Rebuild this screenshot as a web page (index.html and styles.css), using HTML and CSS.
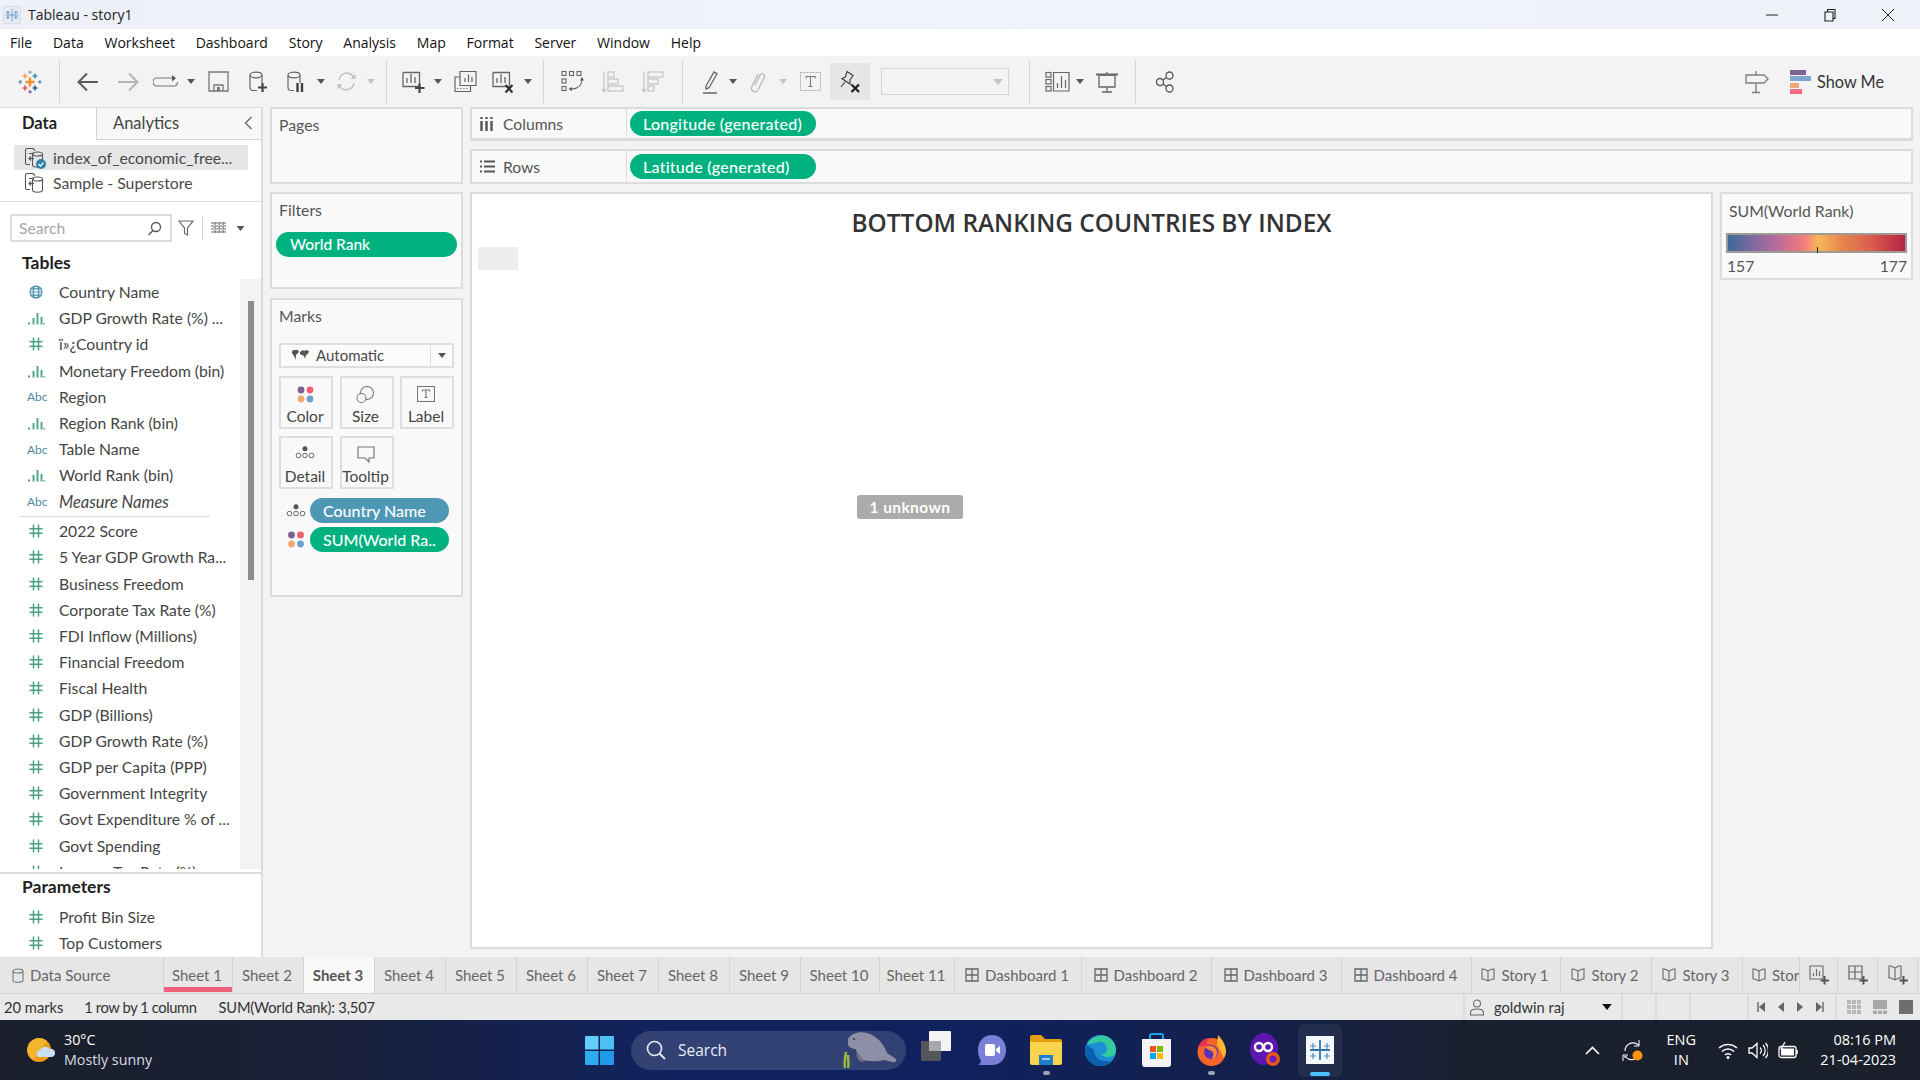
FILE: index.html
```html
<!DOCTYPE html>
<html lang="en">
<head>
<meta charset="UTF-8" />
<title>Tableau - story1</title>
<link rel="stylesheet" href="styles.css">
</head>
<body>

<!-- shared icons -->
<svg class="sprite" aria-hidden="true">
  <symbol id="hash" viewBox="0 0 14 14"><path d="M4.500 .5v13M9.500 .5v13M.5 4.800h13M.5 9.200h13" fill="none" stroke="#4a9f84" stroke-width="1.500"/></symbol>
  <symbol id="bars" viewBox="0 0 18 14"><path d="M2 11.500v2M6.500 7v6.500M10.500 2v11.500M14.500 6v7.500" fill="none" stroke="#4fa58a" stroke-width="1.900"/><path d="M17 12v1.500" stroke="#4fa58a" stroke-width="1.500"/></symbol>
  <symbol id="globe" viewBox="0 0 14 14"><g fill="none" stroke="#4a90ae" stroke-width="1.200"><circle cx="7" cy="7" r="6"/><ellipse cx="7" cy="7" rx="2.800" ry="6"/><path d="M1 7h12M2 3.800h10M2 10.200h10"/></g></symbol>
  <symbol id="caret" viewBox="0 0 8 5"><path d="M0 0h8L4 5z"/></symbol>
  <symbol id="dots" viewBox="0 0 20 13"><g fill="none" stroke="#666" stroke-width="1"><circle cx="3.500" cy="9.500" r="2.300"/><circle cx="10" cy="9.500" r="2.300"/><circle cx="16.500" cy="9.500" r="2.300"/></g><circle cx="10" cy="2.700" r="2.500" fill="#555"/></symbol>
  <symbol id="colors" viewBox="0 0 17 17"><circle cx="4" cy="4" r="3.400" fill="#7b5f93"/><circle cx="13" cy="4" r="3.400" fill="#f1606f"/><circle cx="4" cy="13" r="3.400" fill="#f2a873"/><circle cx="13" cy="13" r="3.400" fill="#6f9fcf"/></symbol>
  <symbol id="board" viewBox="0 0 14 14"><path d="M1 1h12v12H1zM1 7h12M7 1v12" fill="none" stroke="#666" stroke-width="1.300"/></symbol>
  <symbol id="book" viewBox="0 0 14 14"><path d="M7 3L2.500 1H1v10l1.500 0L7 13l4.500-2H13V1h-1.500zM7 3v10" fill="none" stroke="#666" stroke-width="1.100"/></symbol>
  <symbol id="datasrc" viewBox="0 0 22 22"><g fill="none" stroke="#555" stroke-width="1.100"><path d="M6 1.500h-3a1.500 1.500 0 0 0-1.500 1.500v13a1.500 1.500 0 0 0 1.500 1.500h3"/><path d="M6 1.500h3l2 2M5 6.500h5M5 11.500h5M7 9.500l-2 2 2 2"/><ellipse cx="13.500" cy="7" rx="5" ry="2"/><path d="M8.500 7v11c0 1.100 2.200 2.200 5 2.200s5-1.100 5-2.200V7"/></g></symbol>
</svg>

<header class="title-bar">
  <svg class="app-icon" width="18" height="18" viewBox="0 0 18 18"><rect x=".5" y=".5" width="17" height="17" fill="#e6ebf3" stroke="#d8dee8"/><path d="M9 3v12M3 9h12M5 5v3M3.500 6.500h3M13 5v3M11.500 6.500h3M5 10v3M3.500 11.500h3M13 10v3M11.500 11.500h3" stroke="#6f9cc7" stroke-width="1.300" stroke-dasharray="1.500 .7"/></svg>
  <span class="app-title">Tableau - story1</span>
  <div class="win-buttons">
    <svg width="14" height="14" viewBox="0 0 14 14"><path d="M1 7h12" stroke="#222" stroke-width="1"/></svg>
    <svg width="14" height="14" viewBox="0 0 14 14"><path d="M2 4h8v9H2zM4.500 4V1.500h7.500V10.500H10" fill="none" stroke="#222" stroke-width="1.100"/></svg>
    <svg width="14" height="14" viewBox="0 0 14 14"><path d="M1 1l12 12M13 1L1 13" stroke="#222" stroke-width="1"/></svg>
  </div>
</header>

<nav class="menu-bar">
  <a>File</a><a>Data</a><a>Worksheet</a><a>Dashboard</a><a>Story</a><a>Analysis</a><a>Map</a><a>Format</a><a>Server</a><a>Window</a><a>Help</a>
</nav>

<div class="toolbar">
  <span class="tool t-logo">
    <svg width="24" height="24" viewBox="0 0 24 24" fill="none" stroke-width="1.700">
      <path d="M12 7.500v9M7.500 12h9" stroke="#f28e2b" stroke-width="2.300"/>
      <path d="M7 3.500v5M4.500 6h5" stroke="#f2a65a"/><path d="M17 3.500v5M14.500 6h5" stroke="#4e93b5"/>
      <path d="M7 15.500v5M4.500 18h5" stroke="#e15759"/><path d="M17 15.500v5M14.500 18h5" stroke="#2f5f92"/>
      <path d="M12 .5v3.500M10.200 2.200h3.600" stroke="#9fb4cc"/><path d="M12 20v3.500M10.200 21.800h3.600" stroke="#9c7ca8"/>
      <path d="M2.200 10.200v3.600M.5 12H4" stroke="#6b94b8"/><path d="M21.800 10.200v3.600M20 12h3.500" stroke="#6fa0bb"/>
    </svg>
  </span>
  <i class="sep flush"></i>
  <span class="tool t40"><svg width="22" height="20" viewBox="0 0 22 20"><path d="M21 10H2M10 1.500L1.500 10l8.500 8.500" fill="none" stroke="#5c5c5c" stroke-width="2.100"/></svg></span>
  <span class="tool t40"><svg width="22" height="20" viewBox="0 0 22 20"><path d="M1 10h19M12 1.500l8.500 8.500-8.500 8.500" fill="none" stroke="#b5b5b5" stroke-width="2.100"/></svg></span>
  <span class="tool t36"><svg width="26" height="14" viewBox="0 0 26 14"><path d="M20 3H4a3.500 3.500 0 0 0 0 8h17a3.500 3.500 0 0 0 3.500-4" fill="none" stroke="#777" stroke-width="1.200"/><path d="M19 0v6.500l4-3.200z" fill="#555"/></svg></span>
  <span class="tool t14"><svg class="cr" width="8" height="5"><use href="#caret"/></svg></span>
  <span class="tool t40"><svg width="21" height="21" viewBox="0 0 21 21"><path d="M1 1h19v19H1zM6 20v-6h9v6" fill="none" stroke="#777" stroke-width="1.300"/><path d="M9 16h3v4H9z" fill="#777"/></svg></span>
  <span class="tool t40"><svg width="20" height="22" viewBox="0 0 20 22"><g fill="none" stroke="#666" stroke-width="1.200"><ellipse cx="8" cy="4" rx="6" ry="2.800"/><path d="M2 4v13a3 3 0 0 0 3 2.500h4M14 4v8"/></g><path d="M14.500 12v9M10 16.500h9" stroke="#444" stroke-width="2.200"/></svg></span>
  <span class="tool t36"><svg width="18" height="22" viewBox="0 0 18 22"><g fill="none" stroke="#666" stroke-width="1.200"><ellipse cx="7" cy="4" rx="6" ry="2.800"/><path d="M1 4v13a3 3 0 0 0 3 2.500h3M13 4v8"/></g><path d="M10.500 12v9M15 12v9" stroke="#444" stroke-width="2.400"/></svg></span>
  <span class="tool t14"><svg class="cr" width="8" height="5"><use href="#caret"/></svg></span>
  <span class="tool t36"><svg width="21" height="21" viewBox="0 0 21 21"><path d="M3 9a8 8 0 0 1 14-4l1.500 2M18 12a8 8 0 0 1-14 4l-1.500-2" fill="none" stroke="#c2c2c2" stroke-width="1.500"/><path d="M19.500 3v5h-5zM1.500 18v-5h5z" fill="#c2c2c2"/></svg></span>
  <span class="tool t14"><svg class="cr off" width="8" height="5"><use href="#caret"/></svg></span>
  <i class="sep"></i>
  <span class="tool t36"><svg width="23" height="24" viewBox="0 0 23 24"><path d="M1 2.500v14h16.500V2.500H1M5 13v-5M9 13V4M13 13V7" fill="none" stroke="#666" stroke-width="1.300"/><path d="M17.500 13.500v9.500M13 18h9.500" stroke="#444" stroke-width="2.200"/></svg></span>
  <span class="tool t14"><svg class="cr" width="8" height="5"><use href="#caret"/></svg></span>
  <span class="tool t40"><svg width="23" height="24" viewBox="0 0 23 24"><path d="M6 1.500h16v14H6zM11 12V8M14.500 12V4.500M18 12V7M6 7H1v14.500h15.500V15.500M4 19v-1M7 19v-1M10 19v-1M13 19v-1" fill="none" stroke="#666" stroke-width="1.200"/></svg></span>
  <span class="tool t36"><svg width="22" height="24" viewBox="0 0 22 24"><path d="M1 2.500v14h16.500V2.500H1M5 13V8M9 13V4M13 13V7" fill="none" stroke="#666" stroke-width="1.300"/><path d="M13.500 15l7 7.500M20.500 15l-7 7.500" stroke="#333" stroke-width="2.200"/></svg></span>
  <span class="tool t14"><svg class="cr" width="8" height="5"><use href="#caret"/></svg></span>
  <i class="sep"></i>
  <span class="tool t40"><svg width="23" height="24" viewBox="0 0 23 24"><g fill="none" stroke="#666" stroke-width="1.100"><rect x="1" y="1.500" width="4" height="4"/><rect x="8.500" y="1.500" width="4" height="4"/><rect x="16" y="1.500" width="4" height="4"/><rect x="1" y="9" width="4" height="4"/><rect x="1" y="16.500" width="4" height="4"/><path d="M21 9c0 6-4 9.500-10 10"/></g><path d="M19 10.500L21 7l2 3.500zM11 17l-3.500 2 3.500 2z" fill="#555"/></svg></span>
  <span class="tool t40"><svg width="23" height="24" viewBox="0 0 23 24"><g fill="none" stroke="#c4c4c4" stroke-width="1.200"><path d="M3 2v18"/><rect x="7" y="2" width="6" height="5"/><rect x="7" y="9" width="10" height="5"/><rect x="7" y="16" width="15" height="5"/></g><path d="M0.500 19L3 23l2.500-4z" fill="#c4c4c4"/></svg></span>
  <span class="tool t40"><svg width="23" height="24" viewBox="0 0 23 24"><g fill="none" stroke="#c4c4c4" stroke-width="1.200"><path d="M3 2v18"/><rect x="7" y="2" width="15" height="5"/><rect x="7" y="9" width="10" height="5"/><rect x="7" y="16" width="6" height="5"/></g><path d="M0.500 19L3 23l2.500-4z" fill="#c4c4c4"/></svg></span>
  <i class="sep far"></i>
  <span class="tool t32"><svg width="16" height="24" viewBox="0 0 16 24"><path d="M4 16L12 2l3 1.700-8 14-3 1.300zM1 23h14" fill="none" stroke="#666" stroke-width="1.300"/></svg></span>
  <span class="tool t14"><svg class="cr" width="8" height="5"><use href="#caret"/></svg></span>
  <span class="tool t36"><svg width="16" height="24" viewBox="0 0 16 24"><path d="M5 15l5-10a2.500 2.500 0 0 1 4.500 2L8 20a3.500 3.500 0 0 1-6.300-3L8 4" fill="none" stroke="#b8b8b8" stroke-width="1.300"/></svg></span>
  <span class="tool t14"><svg class="cr off" width="8" height="5"><use href="#caret"/></svg></span>
  <span class="tool t40"><svg width="21" height="19" viewBox="0 0 21 19"><rect x=".5" y=".5" width="20" height="18" fill="none" stroke="#aaa" stroke-dasharray="2 1"/><path d="M6 4.500h9v2M10.500 4.500v10M8.500 14.500h4M6 4.500v2" fill="none" stroke="#777" stroke-width="1.100"/></svg></span>
  <span class="tool t40 pressed"><svg width="22" height="24" viewBox="0 0 22 24"><path d="M8 1.500l6 4-3 4.500 0 4-8-5.500 3.500-1.500zM6 12l-4 5" fill="none" stroke="#444" stroke-width="1.200"/><path d="M12.500 14.500l7.500 7.500M20 14.500L12.500 22" stroke="#222" stroke-width="2.300"/></svg></span>
  <span class="combo"><svg class="cr off" width="10" height="6"><use href="#caret"/></svg></span>
  <i class="sep flush"></i>
  <span class="tool t32 after-sep"><svg width="25" height="22" viewBox="0 0 25 22"><g fill="none" stroke="#666" stroke-width="1.200"><rect x="1" y="1.500" width="5" height="4.500"/><rect x="1" y="8.500" width="5" height="4.500"/><rect x="1" y="15.500" width="5" height="4.500"/><path d="M8.500 1.500h15.500v18.500H8.500zM12.500 17v-5M16.500 17V5M20.500 17V9"/></g></svg></span>
  <span class="tool t14"><svg class="cr" width="8" height="5"><use href="#caret"/></svg></span>
  <span class="tool t40"><svg width="22" height="22" viewBox="0 0 22 22"><path d="M3 4h16v12H3zM11 16v5M6 21h10M11 1v3" fill="none" stroke="#666" stroke-width="1.300"/><path d="M0 2.500h22v2H0z" fill="#666"/></svg></span>
  <i class="sep"></i>
  <span class="tool t36 after-sep"><svg width="19" height="22" viewBox="0 0 19 22"><g fill="none" stroke="#555" stroke-width="1.300"><circle cx="13.500" cy="4.500" r="3.500"/><circle cx="4" cy="11" r="3.500"/><circle cx="13.500" cy="17.500" r="3.500"/><path d="M7 9l3.500-2.500M7 13l3.500 2.500"/></g></svg></span>

  <div class="toolbar-right">
    <svg width="24" height="24" viewBox="0 0 24 24"><path d="M1 5h18l4 4-4 4H1zM11 1v4M11 13v9M7 22.500h8" fill="none" stroke="#808080" stroke-width="1.400"/></svg>
    <span class="show-me">
      <svg width="21" height="24" viewBox="0 0 21 24"><rect width="16" height="5" fill="#7b6394"/><rect y="6" width="21" height="5" fill="#7ea5cf"/><rect y="13" width="9" height="5" fill="#f2a878"/><rect y="19" width="12" height="5" fill="#f26b80"/></svg>
      Show Me
    </span>
  </div>
</div>

<div class="workspace">

  <aside class="data-pane">
    <div class="pane-tabs">
      <span class="pane-tab active">Data</span>
      <span class="pane-tab">Analytics</span>
      <svg class="collapse" width="9" height="14" viewBox="0 0 9 14"><path d="M7.500 1L1.500 7l6 6" fill="none" stroke="#666" stroke-width="1.300"/></svg>
    </div>
    <div class="sources">
      <div class="source selected">
        <svg width="22" height="22"><use href="#datasrc"/><circle cx="17" cy="17" r="5" fill="#2f80a8"/><path d="M14.500 17l2 2 3-3.500" fill="none" stroke="#fff" stroke-width="1.200"/></svg>
        index_of_economic_free...
      </div>
      <div class="source">
        <svg width="22" height="22"><use href="#datasrc"/></svg>
        Sample - Superstore
      </div>
    </div>
    <div class="search-row">
      <div class="search-box">
        <span>Search</span>
        <svg width="15" height="15" viewBox="0 0 15 15"><circle cx="9" cy="6" r="4.500" fill="none" stroke="#555" stroke-width="1.300"/><path d="M6 9.500L1.500 14" stroke="#555" stroke-width="1.400"/></svg>
      </div>
      <svg class="funnel" width="16" height="16" viewBox="0 0 16 16"><path d="M1 1h14L9.500 8v7l-3-1.500V8z" fill="none" stroke="#666" stroke-width="1.200"/></svg>
      <i class="search-sep"></i>
      <svg class="list-icon" width="16" height="12" viewBox="0 0 16 12"><path d="M0 1h16M0 4h16M0 7h16M0 10h16M4 0v12M8 0v12M12 0v12" stroke="#666" stroke-width="1.100" stroke-dasharray="3 1"/></svg>
      <svg class="cr list-caret" width="9" height="5"><use href="#caret"/></svg>
    </div>
    <h3 class="group-title">Tables</h3>
    <div class="field-area">
      <ul class="fields">
        <li><svg class="fi" width="14" height="14"><use href="#globe"/></svg>Country Name</li>
        <li><svg class="fi" width="18" height="14"><use href="#bars"/></svg>GDP Growth Rate (%) ...</li>
        <li><svg class="fi" width="14" height="14"><use href="#hash"/></svg>ï»¿Country id</li>
        <li><svg class="fi" width="18" height="14"><use href="#bars"/></svg>Monetary Freedom (bin)</li>
        <li><span class="abc">Abc</span>Region</li>
        <li><svg class="fi" width="18" height="14"><use href="#bars"/></svg>Region Rank (bin)</li>
        <li><span class="abc">Abc</span>Table Name</li>
        <li><svg class="fi" width="18" height="14"><use href="#bars"/></svg>World Rank (bin)</li>
        <li><span class="abc">Abc</span><em>Measure Names</em></li>
        <li class="divider"></li>
        <li><svg class="fi" width="14" height="14"><use href="#hash"/></svg>2022 Score</li>
        <li><svg class="fi" width="14" height="14"><use href="#hash"/></svg>5 Year GDP Growth Ra...</li>
        <li><svg class="fi" width="14" height="14"><use href="#hash"/></svg>Business Freedom</li>
        <li><svg class="fi" width="14" height="14"><use href="#hash"/></svg>Corporate Tax Rate (%)</li>
        <li><svg class="fi" width="14" height="14"><use href="#hash"/></svg>FDI Inflow (Millions)</li>
        <li><svg class="fi" width="14" height="14"><use href="#hash"/></svg>Financial Freedom</li>
        <li><svg class="fi" width="14" height="14"><use href="#hash"/></svg>Fiscal Health</li>
        <li><svg class="fi" width="14" height="14"><use href="#hash"/></svg>GDP (Billions)</li>
        <li><svg class="fi" width="14" height="14"><use href="#hash"/></svg>GDP Growth Rate (%)</li>
        <li><svg class="fi" width="14" height="14"><use href="#hash"/></svg>GDP per Capita (PPP)</li>
        <li><svg class="fi" width="14" height="14"><use href="#hash"/></svg>Government Integrity</li>
        <li><svg class="fi" width="14" height="14"><use href="#hash"/></svg>Govt Expenditure % of ...</li>
        <li><svg class="fi" width="14" height="14"><use href="#hash"/></svg>Govt Spending</li>
        <li><svg class="fi" width="14" height="14"><use href="#hash"/></svg>Income Tax Rate (%)</li>
      </ul>
      <div class="scroll-track"><div class="scroll-thumb"></div></div>
    </div>
    <div class="params">
      <h3 class="group-title">Parameters</h3>
      <ul class="fields">
        <li><svg class="fi" width="14" height="14"><use href="#hash"/></svg>Profit Bin Size</li>
        <li><svg class="fi" width="14" height="14"><use href="#hash"/></svg>Top Customers</li>
      </ul>
    </div>
  </aside>

  <section class="cards">
    <div class="card pages"><h4>Pages</h4></div>
    <div class="card filters">
      <h4>Filters</h4>
      <div class="pill green wide">World Rank</div>
    </div>
    <div class="card marks">
      <h4>Marks</h4>
      <div class="mark-select">
        <svg width="17" height="11" viewBox="0 0 17 11"><path d="M0 1l2-1h4l1 2-2 2-1 1-.5 5L2 6 0 3zM8 2l3-2 1 1 2-1 3 1-1 3-2 1-1 4-1-3-2-1-2-1z" fill="#555"/></svg>
        <span>Automatic</span>
        <b><svg class="cr" width="8" height="5"><use href="#caret"/></svg></b>
      </div>
      <div class="mark-grid">
        <div class="mark-btn"><svg width="17" height="17"><use href="#colors"/></svg>Color</div>
        <div class="mark-btn"><svg width="19" height="18" viewBox="0 0 19 18"><circle cx="11" cy="7" r="6.500" fill="none" stroke="#777" stroke-width="1.100"/><circle cx="5.500" cy="12" r="4.500" fill="#f9f9f9" stroke="#777" stroke-width="1.100"/></svg>Size</div>
        <div class="mark-btn"><svg width="18" height="16" viewBox="0 0 18 16"><rect x=".5" y=".5" width="17" height="15" fill="none" stroke="#777" stroke-width="1.100"/><path d="M5.500 4h7v1.500M9 4v7.500M7.500 11.500h3M5.500 4v1.500" fill="none" stroke="#777" stroke-width="1.100"/></svg>Label</div>
        <div class="mark-btn"><svg width="20" height="13"><use href="#dots"/></svg>Detail</div>
        <div class="mark-btn"><svg width="18" height="17" viewBox="0 0 18 17"><path d="M1 1h16v11h-5v4l-4-4H1z" fill="none" stroke="#777" stroke-width="1.200"/></svg>Tooltip</div>
      </div>
      <div class="mark-fields">
        <div class="mark-field"><svg width="20" height="13"><use href="#dots"/></svg><div class="pill blue">Country Name</div></div>
        <div class="mark-field"><svg width="17" height="17"><use href="#colors"/></svg><div class="pill green">SUM(World Ra..</div></div>
      </div>
    </div>
  </section>

  <section class="view-area">
    <div class="shelf columns">
      <div class="shelf-label">
        <svg width="13" height="14" viewBox="0 0 13 14"><path d="M1.500 0v2M6.500 0v2M11.500 0v2M1.500 4v10M6.500 4v10M11.500 4v10" stroke="#555" stroke-width="2.400"/></svg>
        Columns
      </div>
      <div class="pill green shelf-pill">Longitude (generated)</div>
    </div>
    <div class="shelf">
      <div class="shelf-label rows-label">
        <svg width="15" height="13" viewBox="0 0 15 13"><path d="M0 1.500h2M4 1.500h11M0 6.500h2M4 6.500h11M0 11.500h2M4 11.500h11" stroke="#555" stroke-width="2"/></svg>
        Rows
      </div>
      <div class="pill green shelf-pill">Latitude (generated)</div>
    </div>
    <div class="view-row">
      <div class="canvas">
        <h2 class="viz-title">BOTTOM RANKING COUNTRIES BY INDEX</h2>
        <div class="axis-stub"></div>
        <div class="unknown-badge">1 unknown</div>
      </div>
      <div class="card legend">
        <h4>SUM(World Rank)</h4>
        <div class="ramp"><i></i></div>
        <div class="ramp-labels"><span>157</span><span>177</span></div>
      </div>
    </div>
  </section>
</div>

<div class="tab-bar">
  <span class="tab ds"><svg width="12" height="15" viewBox="0 0 12 15"><path d="M1 3v9.500c0 1 2.200 1.800 5 1.800s5-.8 5-1.800V3" fill="none" stroke="#777" stroke-width="1.100"/><ellipse cx="6" cy="3" rx="5" ry="2" fill="none" stroke="#777" stroke-width="1.100"/></svg>Data Source</span>
  <span class="tab s1">Sheet 1</span>
  <span class="tab">Sheet 2</span>
  <span class="tab current">Sheet 3</span>
  <span class="tab">Sheet 4</span>
  <span class="tab">Sheet 5</span>
  <span class="tab">Sheet 6</span>
  <span class="tab">Sheet 7</span>
  <span class="tab">Sheet 8</span>
  <span class="tab">Sheet 9</span>
  <span class="tab w79">Sheet 10</span>
  <span class="tab w75">Sheet 11</span>
  <span class="tab board first"><svg width="14" height="14"><use href="#board"/></svg>Dashboard 1</span>
  <span class="tab board"><svg width="14" height="14"><use href="#board"/></svg>Dashboard 2</span>
  <span class="tab board"><svg width="14" height="14"><use href="#board"/></svg>Dashboard 3</span>
  <span class="tab board"><svg width="14" height="14"><use href="#board"/></svg>Dashboard 4</span>
  <span class="tab story first"><svg width="14" height="14"><use href="#book"/></svg>Story 1</span>
  <span class="tab story"><svg width="14" height="14"><use href="#book"/></svg>Story 2</span>
  <span class="tab story"><svg width="14" height="14"><use href="#book"/></svg>Story 3</span>
  <span class="tab clipped"><svg width="14" height="14"><use href="#book"/></svg>Story 4</span>
  <span class="tab add first"><svg width="22" height="20" viewBox="0 0 22 20"><path d="M1 1h13v13H1zM4.500 11V8M7.500 11V4M10.500 11V6" fill="none" stroke="#666" stroke-width="1.100"/><path d="M15.500 11v8.500M11.500 15.500H20" stroke="#555" stroke-width="2"/></svg></span>
  <span class="tab add"><svg width="22" height="20" viewBox="0 0 22 20"><path d="M1 1h13v13H1zM1 7h13M7 1v13" fill="none" stroke="#666" stroke-width="1.200"/><path d="M15.500 11v8.500M11.500 15.500H20" stroke="#555" stroke-width="2"/></svg></span>
  <span class="tab add"><svg width="22" height="20" viewBox="0 0 22 20"><path d="M7 3L3 1H1v12h2l4 2 4-2h2V1h-2zM7 3v12" fill="none" stroke="#666" stroke-width="1.100"/><path d="M15.500 11v8.500M11.500 15.500H20" stroke="#555" stroke-width="2"/></svg></span>
</div>

<footer class="status-bar">
  <span class="stat marks-count">20 marks</span>
  <span class="stat rows-count">1 row by 1 column</span>
  <span class="stat sum-text">SUM(World Rank): 3,507</span>
  <div class="status-right">
    <div class="st-cell user">
      <svg width="14" height="17" viewBox="0 0 14 17"><circle cx="7" cy="4.500" r="3.500" fill="none" stroke="#666" stroke-width="1.100"/><path d="M.5 16v-2.500c0-2 2-3.500 6.500-3.500s6.500 1.500 6.500 3.500V16z" fill="none" stroke="#666" stroke-width="1.100"/></svg>
      <span>goldwin raj</span>
      <svg class="user-caret" width="10" height="6"><use href="#caret"/></svg>
    </div>
    <div class="st-cell w34"></div>
    <div class="st-cell w34"></div>
    <div class="st-cell w58"></div>
    <div class="st-cell nav-cell">
      <svg width="8" height="10" viewBox="0 0 8 10"><path d="M1 0v10" stroke="#666" stroke-width="1.400"/><path d="M8 0v10L2 5z" fill="#666"/></svg>
      <svg width="6" height="10" viewBox="0 0 6 10"><path d="M6 0v10L0 5z" fill="#666"/></svg>
      <svg width="6" height="10" viewBox="0 0 6 10"><path d="M0 0v10l6-5z" fill="#666"/></svg>
      <svg width="8" height="10" viewBox="0 0 8 10"><path d="M7 0v10" stroke="#666" stroke-width="1.400"/><path d="M0 0v10l6-5z" fill="#666"/></svg>
    </div>
    <div class="st-cell view-cell">
      <svg width="14" height="14" viewBox="0 0 14 14"><path d="M0 0h4v4H0zM5 0h4v4H5zM10 0h4v4h-4zM0 5h4v4H0zM5 5h4v4H5zM10 5h4v4h-4zM0 10h4v4H0zM5 10h4v4H5zM10 10h4v4h-4z" fill="#b8b8b8"/></svg>
      <svg width="14" height="14" viewBox="0 0 14 14"><path d="M0 0h14v9H0zM0 10.500h4V14H0zM5 10.500h4V14H5zM10 10.500h4V14h-4z" fill="#a8a8a8"/></svg>
      <svg width="14" height="14" viewBox="0 0 14 14"><rect width="14" height="14" fill="#6e6e6e"/></svg>
    </div>
  </div>
</footer>

<div class="taskbar">
  <div class="weather">
    <svg width="28" height="26" viewBox="0 0 28 26"><circle cx="12" cy="13" r="12" fill="#f09a1a"/><path d="M12 1a12 12 0 0 1 8 3L6 23A12 12 0 0 1 12 1z" fill="#f4b52e"/><path d="M11 20a4 4 0 0 1 2-7 6 6 0 0 1 10-1 4 4 0 0 1 2 8z" fill="#c9def2"/></svg>
    <div class="weather-text"><span>30°C</span><small>Mostly sunny</small></div>
  </div>
  <svg class="start" width="29" height="29" viewBox="0 0 29 29"><path d="M0 1a1 1 0 0 1 1-1h12.500v13.500H0z" fill="#62cdf9"/><path d="M15 0h13a1 1 0 0 1 1 1v12.500H15z" fill="#4bc0f5"/><path d="M0 15h13.500v14H1a1 1 0 0 1-1-1z" fill="#2fabf0"/><path d="M15 15h14v13a1 1 0 0 1-1 1H15z" fill="#2199ea"/></svg>
  <div class="task-search">
    <svg width="20" height="20" viewBox="0 0 20 20"><circle cx="8.500" cy="8.500" r="7" fill="none" stroke="#e8ecf5" stroke-width="1.600"/><path d="M13.500 13.500L19 19" stroke="#e8ecf5" stroke-width="1.800"/></svg>
    <span>Search</span>
    <svg class="manatee" width="54" height="40" viewBox="0 0 54 40"><path d="M2 38c-1-6 0-10 1-16M5 38c1-5 0-9 0-13" stroke="#9cb83a" stroke-width="2.500" fill="none"/><path d="M5 9C9 2 20 0 29 5c8 4 13 12 15 18l9 6c1 2-1 4-4 3l-8-2c-8 2-18 2-24-2-3-4-4-8-4-9-4 0-9-2-8-7z" fill="#8e8fa6"/><path d="M16 24c2 4 4 6 7 6l-3 2c-4 0-6-4-7-7z" fill="#6f7088"/><circle cx="11" cy="9" r="1" fill="#333"/></svg>
  </div>
  <div class="task-apps">
    <span class="app a-view"><svg width="30" height="42" viewBox="0 0 30 42"><rect x="0" y="12" width="20" height="20" rx="1" fill="#55565c"/><rect x="8" y="2" width="22" height="20" rx="1" fill="#f3f3f5"/><rect x="8" y="12" width="12" height="10" fill="#a8a9ae"/></svg></span>
    <span class="app a-meet"><svg width="30" height="30" viewBox="0 0 30 30"><path d="M15 0C23 0 29 6 29 15s-6 15-14 15H2l2-4C2 23 1 19 1 15 1 6 7 0 15 0z" fill="#7a7fd8"/><rect x="8" y="9" width="10" height="12" rx="2" fill="#fff"/><path d="M19 14l4-3v8l-4-3z" fill="#fff"/></svg></span>
    <span class="app a-folder"><svg width="32" height="30" viewBox="0 0 32 30"><path d="M0 2a2 2 0 0 1 2-2h9l4 4h15a2 2 0 0 1 2 2v4H0z" fill="#e3a008"/><path d="M0 7h32v21a2 2 0 0 1-2 2H2a2 2 0 0 1-2-2z" fill="#fcd34d"/><path d="M9 20h14v10H9z" fill="#1d7fc9"/><path d="M12 24h8" stroke="#cfe7f8" stroke-width="1.500"/></svg><em class="dot"></em></span>
    <span class="app a-edge"><svg width="31" height="31" viewBox="0 0 31 31"><circle cx="15.500" cy="15.500" r="15.500" fill="#1a8fd4"/><path d="M2 9C6 2 14-1 21 1c6 2 10 8 10 14 0 5-4 7-8 7-3 0-6-1-6-3 2 0 5-1 5-5 0-5-5-8-9-7-5 1-9 3-11 2z" fill="#35c9a0"/><path d="M9 15c0 7 6 12 13 11l3 1c-3 3-7 4-10 4C7 31 0 24 0 16c0-3 1-5 2-7 1 3 4 3 7 6z" fill="#0d5fb0"/></svg></span>
    <span class="app a-store"><svg width="29" height="34" viewBox="0 0 29 34"><path d="M8 7V3a2 2 0 0 1 2-2h9a2 2 0 0 1 2 2v4" fill="none" stroke="#1aa7e8" stroke-width="2"/><path d="M0 6h29v25a3 3 0 0 1-3 3H3a3 3 0 0 1-3-3z" fill="#f4f4f4"/><rect x="8" y="13" width="6" height="6" fill="#f25022"/><rect x="15" y="13" width="6" height="6" fill="#7fba00"/><rect x="8" y="20" width="6" height="6" fill="#00a4ef"/><rect x="15" y="20" width="6" height="6" fill="#ffb900"/></svg></span>
    <span class="app a-fox"><svg width="29" height="31" viewBox="0 0 29 31"><circle cx="14.500" cy="17" r="14" fill="#f5652a"/><path d="M21 0c5 5 8 11 8 17 0 2-1 4-2 6L20 10z" fill="#ffb52e"/><path d="M1 12C3 7 7 3 12 3l-3 5 5 2z" fill="#e3305a"/><circle cx="14" cy="17" r="7" fill="#5b32b8"/><path d="M9 12c5-3 11 0 11 6 0 3-3 6-6 6 3-2 3-6 1-8-2-1-5-1-6-4z" fill="#ff8a2e"/></svg><em class="dot"></em></span>
    <span class="app a-inf"><svg width="30" height="34" viewBox="0 0 30 34"><ellipse cx="14" cy="16" rx="14" ry="16" fill="#5e16b0"/><circle cx="9" cy="14" r="4" fill="none" stroke="#fff" stroke-width="2.400"/><circle cx="18" cy="14" r="4" fill="none" stroke="#fff" stroke-width="2.400"/><circle cx="23" cy="26" r="7" fill="#e8561a"/><circle cx="23" cy="26" r="3.500" fill="#6b1fb5"/></svg></span>
    <span class="app a-tab">
      <svg width="28" height="28" viewBox="0 0 28 28"><rect width="28" height="28" fill="#f4f7fb"/><path d="M14 4v20M4 14h20" stroke="#2f74b0" stroke-width="1.800"/><path d="M7 7v6M4 10h6M21 7v6M18 10h6M7 17v6M4 20h6M21 17v6M18 20h6" stroke="#4a8fc8" stroke-width="1.200"/></svg>
      <em class="bar"></em>
    </span>
  </div>
  <div class="tray">
    <svg class="chev" width="15" height="9" viewBox="0 0 15 9"><path d="M1 8l6.500-6.500L14 8" fill="none" stroke="#fff" stroke-width="1.600"/></svg>
    <svg class="sync" width="21" height="21" viewBox="0 0 21 21"><path d="M3 11a8 8 0 0 1 12-7l2 1M2 17l3 0M13 19a8 8 0 0 1-10-3" fill="none" stroke="#fff" stroke-width="1.100"/><path d="M17 0v6h-5M1 21v-6h5" fill="none" stroke="#fff" stroke-width="1"/><circle cx="15.500" cy="15.500" r="5" fill="#f7930e"/></svg>
    <div class="lang"><span>ENG</span><span>IN</span></div>
    <svg class="wifi" width="20" height="17" viewBox="0 0 20 17"><path d="M1 6a13 13 0 0 1 18 0M4 9.500a8.500 8.500 0 0 1 12 0M7 13a4 4 0 0 1 6 0" fill="none" stroke="#fff" stroke-width="1.500"/><circle cx="10" cy="15.500" r="1.500" fill="#fff"/></svg>
    <svg class="vol" width="20" height="17" viewBox="0 0 20 17"><path d="M1 6h3l5-4.500v14L4 11H1z" fill="none" stroke="#fff" stroke-width="1.300"/><path d="M12 5.500a4 4 0 0 1 0 6M15 3a8 8 0 0 1 0 11M17.500 1a11 11 0 0 1 0 15" fill="none" stroke="#fff" stroke-width="1.200"/></svg>
    <svg class="batt" width="21" height="17" viewBox="0 0 21 17"><rect x="1" y="4.500" width="17" height="11" rx="2" fill="none" stroke="#fff" stroke-width="1.300"/><rect x="3" y="6.500" width="13" height="7" fill="#fff"/><path d="M19 8v4" stroke="#fff" stroke-width="1.600"/><path d="M7 0L3 7h3l-1 4" fill="none" stroke="#fff" stroke-width="1.200"/></svg>
    <div class="clock"><span>08:16 PM</span><span>21-04-2023</span></div>
  </div>
</div>

</body>
</html>
```

FILE: styles.css
```css
* { box-sizing: border-box; }
html, body { margin: 0; height: 100%; }
body { width: 1920px; height: 1080px; overflow: hidden; display: flex; flex-direction: column; font-family: "Lato", "Open Sans", sans-serif; font-size: 15.700px; color: #4a4a4a; background: #f3f3f3; }
.sprite { display: none; }
h2, h3, h4, ul { margin: 0; padding: 0; }
ul { list-style: none; }
.cr { fill: #555; }
.cr.off { fill: #c4c4c4; }

/* window chrome */
.title-bar { height: 29px; flex: none; display: flex; align-items: center; padding-left: 3px; background: linear-gradient(90deg, #edf0f8, #eff3fb 50%, #eff2f8); font-family: "Open Sans", sans-serif; font-size: 14px; color: #222; }
.app-title { margin-left: 7px; }
.win-buttons { margin-left: auto; display: flex; gap: 44px; padding-right: 25px; }
.menu-bar { height: 27px; flex: none; display: flex; align-items: center; padding-left: 10px; gap: 20.800px; background: #fff; font-family: "Open Sans", sans-serif; font-size: 14px; color: #111; }

/* toolbar */
.toolbar { height: 51px; flex: none; display: flex; align-items: center; background: #f3f3f3; }
.tool { flex: none; height: 37px; display: flex; align-items: center; justify-content: center; }
.t-logo { width: 59px; }
.t14 { width: 14px; }
.t32 { width: 32px; }
.t36 { width: 36px; }
.t40 { width: 40px; }
.pressed { background: #e6e6e6; }
.sep { flex: none; width: 1px; height: 43px; margin: 0 8px; background: #d4d4d4; }
.sep.flush { margin-left: 0; }
.sep.far { margin-left: 10px; margin-right: 11px; }
.after-sep { margin-left: 3px; }
.combo { flex: none; width: 128px; height: 27px; margin: 0 20px 0 11px; padding-right: 5px; display: flex; align-items: center; justify-content: flex-end; border: 1px solid #d4d4d4; }
.toolbar-right { margin-left: auto; padding-right: 36px; display: flex; align-items: center; gap: 21px; }
.show-me { display: flex; align-items: center; gap: 6px; font-size: 16.300px; color: #333; }

/* main area */
.workspace { flex: 1; min-height: 0; display: flex; align-items: flex-start; }
.data-pane { flex: none; width: 263px; height: 850px; display: flex; flex-direction: column; background: #fff; border-right: 2px solid #dcdcdc; }
.pane-tabs { height: 33px; flex: none; display: flex; position: relative; border-top: 1px solid #dcdcdc; }
.pane-tab { display: flex; align-items: center; padding-bottom: 2px; font-size: 16.500px; background: #f7f7f7; border-bottom: 1px solid #d4d4d4; flex: 1; padding-left: 16px; color: #444; }
.pane-tab.active { flex: none; width: 97px; padding-left: 22px; background: #fff; border-bottom: 0; border-right: 1px solid #d4d4d4; font-weight: 700; color: #222; }
.collapse { position: absolute; right: 8px; top: 8px; }
.sources { height: 62px; flex: none; padding-top: 5px; border-bottom: 1px solid #dcdcdc; }
.source { height: 25px; margin: 0 13px 0 14px; padding-left: 10px; display: flex; align-items: center; gap: 7px; font-size: 15.800px; white-space: nowrap; }
.source.selected { background: #e6e6e6; }
.search-row { height: 28px; flex: none; margin-top: 12px; padding-left: 10px; display: flex; align-items: center; }
.search-box { width: 162px; height: 28px; padding: 0 8px 0 7px; display: flex; align-items: center; justify-content: space-between; background: #fff; border: 2px solid #dcdcdc; color: #a5a5a5; }
.funnel { margin-left: 6px; }
.search-sep { width: 1px; height: 23px; margin: 0 8px 0 8px; background: #d4d4d4; }
.list-caret { margin-left: 9px; }
.group-title { font-size: 17.500px; font-weight: 700; color: #222; line-height: 20px; padding-left: 22px; }
.data-pane > .group-title { margin-top: 11px; height: 27px; }
.field-area { height: 590px; flex: none; display: flex; overflow: hidden; margin-top: -1px; }
.fields { flex: 1; min-width: 0; }
.fields li { height: 26.200px; display: flex; align-items: center; padding-left: 59px; position: relative; white-space: nowrap; font-size: 15.700px; color: #444; }
.fields li em { font-size: 1.050em; }
.fields li.divider { height: 1px; margin: 1.500px 30px 1px 20px; padding: 0; background: #dcdcdc; }
.fi { position: absolute; left: 29px; }
.fi[width="18"] { left: 27px; }
.abc { position: absolute; left: 27px; font-size: 12px; color: #4f8aa6; }
.scroll-track { flex: none; width: 21px; background: #f3f3f3; padding: 22px 7px 0 8px; }
.scroll-thumb { height: 279px; background: #8c8c8c; }
.params { flex: 1; border-top: 2px solid #dcdcdc; margin-top: 3px; padding-top: 3px; }
.params .group-title { height: 27px; }

.cards { flex: none; width: 193px; margin-left: 7px; display: flex; flex-direction: column; }
.card { background: #f9f9f9; border: 2px solid #dcdcdc; }
.card h4 { font-size: 15.800px; font-weight: 400; color: #555; line-height: 20px; padding: 5.500px 0 0 7px; }
.pages { height: 77px; }
.filters { height: 97px; margin-top: 8px; }
.marks { height: 299px; margin-top: 9px; }
.pill { display: flex; align-items: center; height: 25px; padding-bottom: 1px; border-radius: 13px; color: #fff; white-space: nowrap; font-size: 16px; font-weight: 500; }
.pill.green { background: #00b180; }
.pill.blue { background: #4e97b5; }
.pill.wide { margin: 12px 4px 0 4px; padding-left: 14px; font-size: 15.500px; }
.mark-select { height: 25px; margin: 17px 7px 0 7px; padding-left: 11px; display: flex; align-items: center; gap: 7px; font-size: 15px; background: #fbfbfb; border: 2px solid #dedede; }
.mark-select b { margin-left: auto; width: 22px; height: 100%; display: flex; align-items: center; justify-content: center; border-left: 1px solid #dedede; }
.mark-grid { margin: 8px 0 0 7px; display: grid; grid-template-columns: repeat(3, 54px); grid-auto-rows: 53px; gap: 7px 6.500px; font-size: 15.500px; }
.mark-btn { display: flex; flex-direction: column; align-items: center; justify-content: space-between; padding: 8px 2px 2px 0; border: 2px solid #dedede; background: #f9f9f9; color: #444; white-space: nowrap; }
.mark-fields { margin-top: 9.500px; display: flex; flex-direction: column; gap: 4px; }
.mark-field { display: flex; align-items: center; padding-left: 14px; }
.mark-field svg { flex: none; width: 20px; }
.mark-field .pill { margin-left: 4px; width: 139px; padding-left: 13px; }

.view-area { flex: none; width: 1443px; margin-left: 7px; display: flex; flex-direction: column; }
.shelf { height: 35px; display: flex; align-items: center; background: #f9f9f9; border: 2px solid #dcdcdc; margin-bottom: 8px; }
.shelf.columns { height: 34px; border-bottom-width: 3px; }
.shelf-label { width: 155px; height: 100%; flex: none; display: flex; align-items: center; gap: 10px; padding-left: 8px; color: #555; border-right: 1px solid #dcdcdc; }
.rows-label { gap: 8px; }
.shelf-pill { margin-left: 3px; width: 186px; padding-left: 13px; letter-spacing: .25px; }
.view-row { display: flex; align-items: flex-start; }
.canvas { position: relative; width: 1243px; height: 757px; background: #fff; border: 2px solid #dcdcdc; }
.viz-title { font-family: "Open Sans", sans-serif; font-size: 24.400px; font-weight: 600; color: #333; text-align: center; line-height: 32px; padding-top: 13px; }
.axis-stub { width: 40px; height: 23px; margin: 8px 0 0 6px; background: #eee; }
.unknown-badge { position: absolute; left: 385px; top: 301px; width: 106px; height: 24px; border-radius: 3px; background: #ababab; color: #fff; font-size: 15.500px; font-weight: 700; letter-spacing: .4px; display: flex; align-items: center; justify-content: center; }
.legend { width: 193px; height: 88px; margin-left: 7px; }
.legend h4 { padding-top: 7px; padding-left: 7px; }
.ramp { position: relative; height: 20px; margin: 12px 4px 0 4px; border: 2px solid #9b9b94; background: linear-gradient(90deg, #3d6a99, #7b6a9e 13%, #b56b9e 27%, #f47c7c 43%, #f7b75b 51%, #e88a4c 63%, #d95f4e 80%, #b72344); }
.ramp i { position: absolute; left: 50%; bottom: -2px; width: 1px; height: 6px; background: #222; }
.ramp-labels { margin: 4px 4px 0 5px; display: flex; justify-content: space-between; color: #555; line-height: 18px; }

/* sheet tabs */
.tab-bar { height: 37px; flex: none; display: flex; background: #e6e6e6; border-bottom: 1px solid #d4d4d4; overflow: hidden; font-size: 15px; }
.tab { flex: none; width: 71px; height: 36px; padding-right: 2px; display: flex; align-items: center; justify-content: center; gap: 6px; color: #666; border-right: 1px solid #d4d4d4; white-space: nowrap; position: relative; }
.tab svg { flex: none; }
.tab.ds { width: 164px; padding-left: 12px; justify-content: flex-start; }
.tab.s1 { width: 69px; }
.tab.s1::after { content: ""; position: absolute; left: 0; right: 0; bottom: 1px; height: 5px; background: #f0607a; }
.tab.current { background: #f9f9f9; font-weight: 700; color: #555; }
.tab.w79 { width: 79px; }
.tab.w75 { width: 75px; }
.tab.board { width: 130px; }
.tab.board.first { width: 127px; }
.tab.story { width: 91px; }
.tab.story.first { width: 89px; }
.tab.clipped { width: 57px; overflow: hidden; justify-content: flex-start; padding: 0 0 0 9px; }
.tab.add { width: 40px; padding: 0 0 0 3px; }
.tab.add.first { width: 38px; }

.status-bar { height: 26px; flex: none; display: flex; align-items: center; background: #e9e9e9; color: #333; font-size: 14.700px; }
.stat { margin-left: 23px; }
.marks-count { margin-left: 4px; }
.rows-count { margin-left: 21px; letter-spacing: -.4px; }
.sum-text { margin-left: 22px; letter-spacing: -.2px; }
.status-right { margin-left: auto; height: 100%; display: flex; }
.st-cell { height: 100%; display: flex; align-items: center; border-left: 2px solid #dcdcdc; }
.user { width: 158px; padding-left: 5px; gap: 10px; color: #333; }
.user-caret { margin-left: auto; margin-right: 9px; fill: #111; }
.w34 { width: 34px; }
.w58 { width: 58px; }
.nav-cell { width: 88px; padding-left: 8px; gap: 13px; }
.view-cell { width: 85px; padding-left: 10px; gap: 12px; }

/* windows taskbar */
.taskbar { height: 60px; flex: none; display: flex; align-items: center; background: linear-gradient(90deg, #1a1f2b, #1a2036 15%, #11235f 35%, #10225e 50%, #14204a 66%, #1b2030 76%, #1a1f2b); color: #fff; }
.weather { width: 585px; flex: none; padding-left: 27px; display: flex; align-items: center; gap: 9px; }
.weather-text { display: flex; flex-direction: column; font-family: "Open Sans", sans-serif; font-size: 14.300px; line-height: 20px; }
.weather-text small { font-size: 14.300px; color: #d8dbe2; }
.start { flex: none; }
.task-search { width: 275px; height: 39px; margin-left: 17px; padding: 0 9px 0 15px; display: flex; align-items: center; gap: 12px; flex: none; background: rgba(255, 255, 255, .14); border-radius: 20px; font-family: "Open Sans", sans-serif; font-size: 15.500px; color: #e8ecf5; }
.manatee { margin-left: auto; }
.task-apps { display: flex; align-items: center; flex: none; height: 100%; }
.app { position: relative; flex: none; width: 54px; height: 100%; display: flex; align-items: center; justify-content: center; }
.a-view { width: 45px; margin: 0 8px 0 7px; }
.a-meet { width: 53px; margin-left: -1px; }
.a-folder { width: 55px; }
.a-edge { width: 55px; }
.a-store { width: 56px; }
.a-fox { width: 54px; }
.a-inf { width: 54px; }
.a-tab { width: 44px; height: 53px; margin-left: 6px; background: rgba(255, 255, 255, .06); border-radius: 5px; }
.dot { position: absolute; left: 50%; bottom: 5px; width: 7px; height: 4px; margin-left: -3px; border-radius: 2px; background: #9aa3b5; }
.bar { position: absolute; left: 50%; bottom: 1px; width: 20px; height: 4px; margin-left: -10px; border-radius: 2px; background: #4cc2ff; }
.tray { margin-left: auto; padding-right: 24px; display: flex; align-items: center; font-family: "Open Sans", sans-serif; font-size: 14.500px; }
.chev { margin-right: 22px; }
.sync { margin-right: 23px; }
.lang { width: 30px; display: flex; flex-direction: column; align-items: center; line-height: 20px; margin-right: 22px; }
.wifi { margin-right: 10px; }
.vol { margin-right: 10px; }
.batt { margin-right: 21px; }
.clock { display: flex; flex-direction: column; align-items: flex-end; line-height: 20px; }
```
